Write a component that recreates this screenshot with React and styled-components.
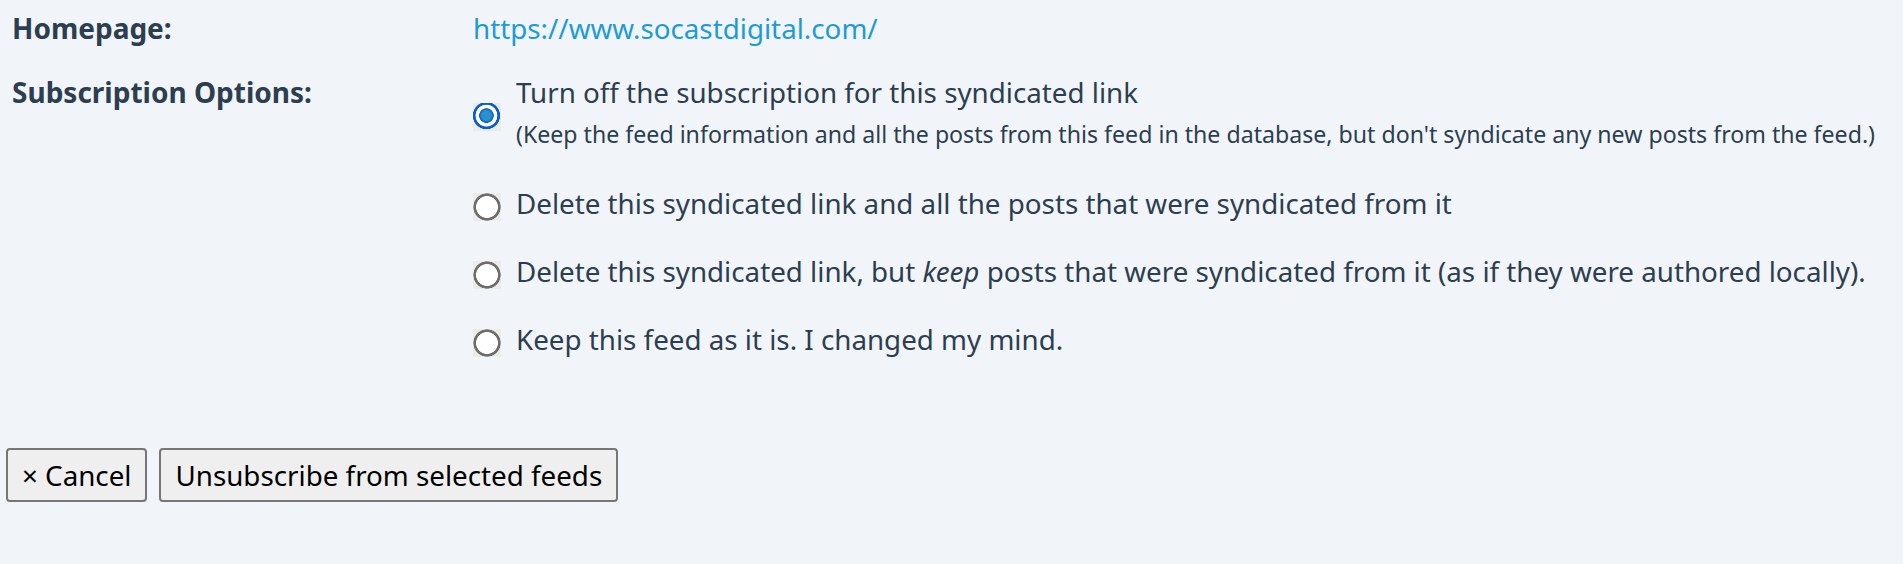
import React from "react";
import styled, { createGlobalStyle } from "styled-components";

const Global = createGlobalStyle`
  html, body { margin: 0; padding: 0; background: #f1f5f9; }
  body { font-family: "Noto Sans", "Open Sans", sans-serif; color: #2c3e50; }
`;

const Page = styled.div`
  padding: 8px 0 0 12px;
`;

const Form = styled.div`
  display: grid;
  grid-template-columns: 461px auto;
  row-gap: 24px;
  font-size: 27.75px;
  line-height: 40px;
`;

const Label = styled.div`
  font-size: 28px;
  font-weight: 700;
  color: #2c3e50;
`;

const Link = styled.a`
  color: #1e9bd7;
  text-decoration: none;
`;

const Options = styled.div`
  display: flex;
  flex-direction: column;
  gap: 28px;
`;

const Option = styled.label`
  display: flex;
  align-items: center;
  gap: 15px;
  cursor: pointer;
`;

const Radio = styled.input.attrs({ type: "radio" })`
  appearance: none;
  -webkit-appearance: none;
  margin: 7px 0 0;
  flex: 0 0 auto;
  width: 28px;
  height: 28px;
  background: ${(p) =>
    p.checked
      ? `radial-gradient(circle at 48% 45%, #2b90cf 0 4.5px, #1a78c6 6px, #0d5fb8 7px, #ffffff 7.6px 10.6px, #0a5fd0 11.2px 13.3px, #ebebeb 13.9px)`
      : `radial-gradient(circle at center, #ffffff 0 10.6px, #6e6e6e 11.2px 13.3px, #ebebeb 13.9px)`};
`;

const OptionText = styled.div`
  display: flex;
  flex-direction: column;
`;

const Note = styled.span`
  font-size: 23.15px;
  line-height: 41px;
  margin-top: 2px;
`;

const Actions = styled.div`
  display: flex;
  gap: 12px;
  margin: 89px 0 0 -6px;
`;

const Button = styled.button`
  font-family: "Noto Sans", "Open Sans", sans-serif;
  font-size: 27.75px;
  line-height: 36px;
  color: #000;
  background: #efefef;
  border: 2px solid #767676;
  border-radius: 4px;
  padding: 7px 14px;
  cursor: pointer;
`;

const options = [
  {
    text: "Turn off the subscription for this syndicated link",
    note: "(Keep the feed information and all the posts from this feed in the database, but don't syndicate any new posts from the feed.)",
    checked: true,
  },
  { text: "Delete this syndicated link and all the posts that were syndicated from it" },
  {
    text: (
      <>
        Delete this syndicated link, but <em>keep</em> posts that were syndicated from it (as if they were authored locally).
      </>
    ),
  },
  { text: "Keep this feed as it is. I changed my mind." },
];

export default function App() {
  return (
    <>
      <Global />
      <Page>
        <Form>
          <Label>Homepage:</Label>
          <div>
            <Link href="#">https://www.socastdigital.com/</Link>
          </div>
          <Label>Subscription Options:</Label>
          <Options>
            {options.map((o, i) => (
              <Option key={i}>
                <Radio name="sub" checked={!!o.checked} readOnly />
                <OptionText>
                  <span>{o.text}</span>
                  {o.note && <Note>{o.note}</Note>}
                </OptionText>
              </Option>
            ))}
          </Options>
        </Form>
        <Actions>
          <Button>× Cancel</Button>
          <Button>Unsubscribe from selected feeds</Button>
        </Actions>
      </Page>
    </>
  );
}
